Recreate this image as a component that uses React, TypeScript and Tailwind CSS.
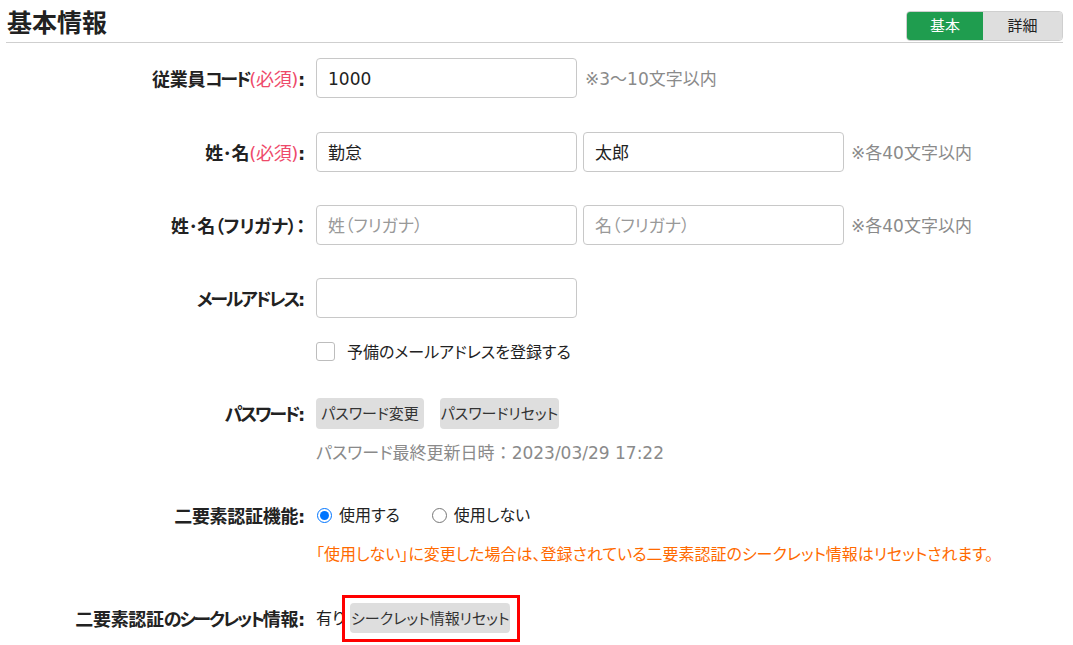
import React from "react";

const FONT = "font-['DejaVu_Sans','Noto_Sans_CJK_JP',sans-serif] [font-feature-settings:'palt']";

function Label({ children }: { children: React.ReactNode }) {
  return (
    <div className="w-[305px] shrink-0 text-right text-[18px] font-bold text-[#222] leading-[24px] tracking-[-0.3px] pt-[3px]">
      {children}
    </div>
  );
}

function K({ children }: { children: React.ReactNode }) {
  return <span className="tracking-[-2.3px]">{children}</span>;
}

function Req() {
  return <span className="font-normal text-[#ee4a6a]">(必須)</span>;
}

function TextInput({ value, placeholder }: { value?: string; placeholder?: string }) {
  return (
    <div className="w-[261px] h-[40px] border border-[#c8c8c8] rounded-[4px] px-[11px] flex items-center text-[17px] bg-white">
      {value ? (
        <span className="text-[#222] pt-[3px]">{value}</span>
      ) : (
        <span className="text-[#999] pt-[3px]">{placeholder}</span>
      )}
    </div>
  );
}

function Note({ children }: { children: React.ReactNode }) {
  return <span className="text-[17px] text-[#8a8a8a] leading-[24px] pt-[2px]">{children}</span>;
}

export default function App() {
  return (
    <div className={`w-[1073px] h-[645px] bg-white overflow-hidden ${FONT}`}>
      {/* header */}
      <div className="ml-[6px] mr-[10px] h-[43px] border-b border-[#cfcfcf] flex items-start justify-between">
        <h1 className="ml-[1px] mt-[7px] text-[25px] font-bold leading-[34px] text-[#222]">基本情報</h1>
        <div className="mt-[11px] flex h-[30px] border border-[#cfcfcf] rounded-[4px] overflow-hidden text-[15px]">
          <div className="w-[76px] bg-[#1f9d4f] text-white flex items-center justify-center">基本</div>
          <div className="w-[79px] bg-[#dedede] text-[#222] flex items-center justify-center">詳細</div>
        </div>
      </div>

      {/* row 1 */}
      <div className="mt-[15px] flex items-center h-[40px]">
        <Label>
          従業員<K>コード</K>
          <Req />:
        </Label>
        <div className="ml-[11px] flex items-center gap-[8px]">
          <TextInput value="1000" />
          <Note>※3〜10文字以内</Note>
        </div>
      </div>

      {/* row 2 */}
      <div className="mt-[34px] flex items-center h-[40px]">
        <Label>
          姓･名<Req />:
        </Label>
        <div className="ml-[11px] flex items-center">
          <TextInput value="勤怠" />
          <div className="ml-[6px]">
            <TextInput value="太郎" />
          </div>
          <div className="ml-[7px] flex">
            <Note>※各40文字以内</Note>
          </div>
        </div>
      </div>

      {/* row 3 */}
      <div className="mt-[33px] flex items-center h-[40px]">
        <Label>姓･名（フリガナ）：</Label>
        <div className="ml-[11px] flex items-center">
          <TextInput placeholder="姓（フリガナ）" />
          <div className="ml-[6px]">
            <TextInput placeholder="名（フリガナ）" />
          </div>
          <div className="ml-[7px] flex">
            <Note>※各40文字以内</Note>
          </div>
        </div>
      </div>

      {/* row 4 */}
      <div className="mt-[33px] flex items-center h-[40px]">
        <Label>
          <K>メールアドレス</K>:
        </Label>
        <div className="ml-[11px]">
          <TextInput />
        </div>
      </div>

      {/* checkbox */}
      <div className="mt-[24px] flex items-center h-[19px] pl-[316px]">
        <div className="w-[19px] h-[19px] border border-[#bdbdbd] rounded-[3px] bg-white" />
        <span className="ml-[12px] text-[16px] text-[#222] leading-[24px] pt-[2px]">予備のメールアドレスを登録する</span>
      </div>

      {/* password */}
      <div className="mt-[37px] flex items-center h-[31px]">
        <Label>
          <K>パスワード</K>:
        </Label>
        <div className="ml-[11px] flex items-center gap-[16px]">
          <button className="w-[108px] h-[31px] bg-[#dedede] rounded-[4px] text-[15px] text-[#333] flex items-center justify-center pt-[2px]">
            パスワード変更
          </button>
          <button className="w-[119px] h-[31px] bg-[#dedede] rounded-[4px] text-[15px] text-[#333] flex items-center justify-center pt-[2px]">
            パスワードリセット
          </button>
        </div>
      </div>
      <div className="mt-[12px] pl-[316px] text-[17px] leading-[24px] text-[#8a8a8a]">
        パスワード最終更新日時<span className="[font-feature-settings:normal]">：</span>2023/03/29 17:22
      </div>

      {/* 2FA */}
      <div className="mt-[38px] flex items-center h-[24px]">
        <Label>二要素認証機能:</Label>
        <div className="ml-[12px] flex items-center text-[16px] text-[#222]">
          <input type="radio" name="tfa" defaultChecked className="m-0 w-[15px] h-[15px] accent-[#0075ff]" />
          <span className="ml-[7px] pt-[2px]">使用する</span>
          <input type="radio" name="tfa" className="ml-[32px] m-0 w-[15px] h-[15px]" />
          <span className="ml-[7px] pt-[2px]">使用しない</span>
        </div>
      </div>
      <div className="mt-[16px] pl-[316px] text-[16px] leading-[24px] text-[#ff6a00]">
        「使用しない」に変更した場合は、登録されている二要素認証のシークレット情報はリセットされます。
      </div>

      {/* secret */}
      <div className="mt-[36px] flex items-center h-[30px]">
        <Label>
          二要素認証<K>のシークレット</K>情報:
        </Label>
        <div className="ml-[11px] flex items-center text-[16px] text-[#222]">
          <span className="pt-[2px]">有り</span>
          <div className="relative ml-[5px]">
            <button className="w-[160px] h-[30px] bg-[#dedede] rounded-[4px] text-[15px] text-[#333] flex items-center justify-center pt-[2px]">
              シークレット情報リセット
            </button>
            <div className="absolute left-[-8px] top-[-8px] w-[178px] h-[47px] border-[3px] border-[#ff0000] pointer-events-none" />
          </div>
        </div>
      </div>
    </div>
  );
}
